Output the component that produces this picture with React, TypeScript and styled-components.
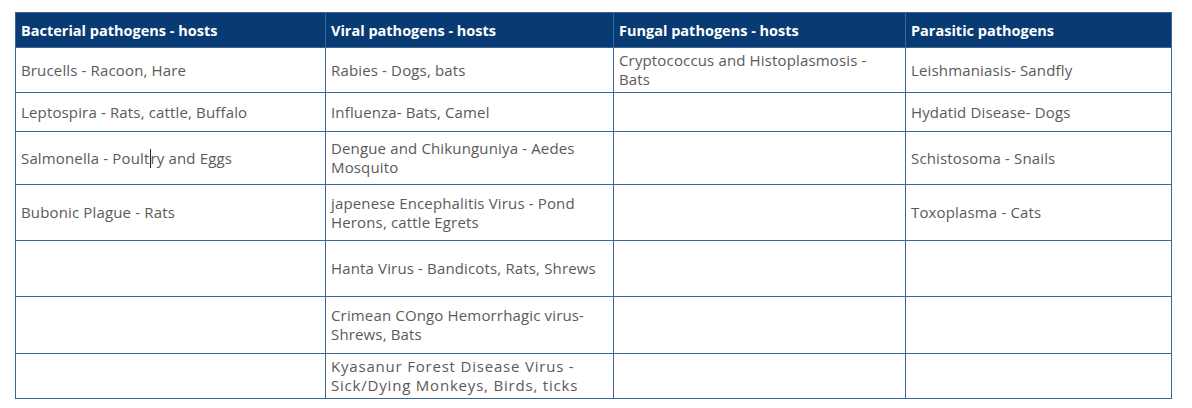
import React from "react";
import styled, { createGlobalStyle } from "styled-components";

const GlobalStyle = createGlobalStyle`
  html, body {
    margin: 0;
    padding: 0;
    background: #ffffff;
  }
  body {
    font-family: "Open Sans", "Liberation Sans", sans-serif;
  }
`;

type Row = {
  height: number;
  cells: React.ReactNode[];
};

const headers = [
  "Bacterial pathogens - hosts",
  "Viral pathogens - hosts",
  "Fungal pathogens - hosts",
  "Parasitic pathogens",
];

const widths = [310, 288, 292, 266];

function App() {
  const rows: Row[] = [
    {
      height: 45,
      cells: [
        "Brucells - Racoon, Hare",
        "Rabies - Dogs, bats",
        <>
          Cryptococcus and Histoplasmosis -<br />
          Bats
        </>,
        "Leishmaniasis- Sandfly",
      ],
    },
    {
      height: 39,
      cells: ["Leptospira - Rats, cattle, Buffalo", "Influenza- Bats, Camel", "", "Hydatid Disease- Dogs"],
    },
    {
      height: 53,
      cells: [
        <>
          Salmonella - Poult
          <Caret />
          ry and Eggs
        </>,
        <>
          Dengue and Chikunguniya - Aedes
          <br />
          Mosquito
        </>,
        "",
        "Schistosoma - Snails",
      ],
    },
    {
      height: 56,
      cells: [
        "Bubonic Plague - Rats",
        <>
          japenese Encephalitis Virus - Pond
          <br />
          Herons, cattle Egrets
        </>,
        "",
        "Toxoplasma - Cats",
      ],
    },
    {
      height: 56,
      cells: ["", "Hanta Virus - Bandicots, Rats, Shrews", "", ""],
    },
    {
      height: 57,
      cells: [
        "",
        <>
          Crimean COngo Hemorrhagic virus-
          <br />
          Shrews, Bats
        </>,
        "",
        "",
      ],
    },
    {
      height: 45,
      cells: [
        "",
        <Spaced $spacing={0.8}>
          Kyasanur Forest Disease Virus -
          <br />
          Sick/Dying Monkeys, Birds, ticks
        </Spaced>,
        "",
        "",
      ],
    },
  ];

  return (
    <Page>
      <GlobalStyle />
      <Table>
        <colgroup>
          {widths.map((w, i) => (
            <col key={i} style={{ width: w }} />
          ))}
        </colgroup>
        <thead>
          <tr>
            {headers.map((h) => (
              <HeadCell key={h}>{h}</HeadCell>
            ))}
          </tr>
        </thead>
        <tbody>
          {rows.map((row, i) => (
            <tr key={i} style={{ height: row.height }}>
              {row.cells.map((c, j) => (
                <Cell key={j}>{c}</Cell>
              ))}
            </tr>
          ))}
        </tbody>
      </Table>
    </Page>
  );
}

export default App;

const Page = styled.div`
  padding: 12px 0 0 15px;
`;

const Table = styled.table`
  border-collapse: collapse;
  table-layout: fixed;
  width: 1157px;
  border: 1.5px solid #3b6696;
`;

const HeadCell = styled.th`
  height: 34px;
  background: #083a74;
  color: #ffffff;
  font-size: 14.5px;
  font-weight: 700;
  text-align: left;
  padding: 0 5px;
  border: 1.5px solid #3b6696;
  letter-spacing: 0;
  white-space: nowrap;
`;

const Cell = styled.td`
  border: 1.5px solid #3b6696;
  padding: 0 5px;
  color: #5c5a58;
  font-size: 15px;
  line-height: 19px;
  letter-spacing: 0.15px;
  vertical-align: middle;
  white-space: nowrap;
`;

const Spaced = styled.span<{ $spacing: number }>`
  letter-spacing: ${(p) => p.$spacing}px;
`;

const Caret = styled.span`
  display: inline-block;
  width: 1px;
  height: 19px;
  background: #222;
  vertical-align: -4px;
`;
